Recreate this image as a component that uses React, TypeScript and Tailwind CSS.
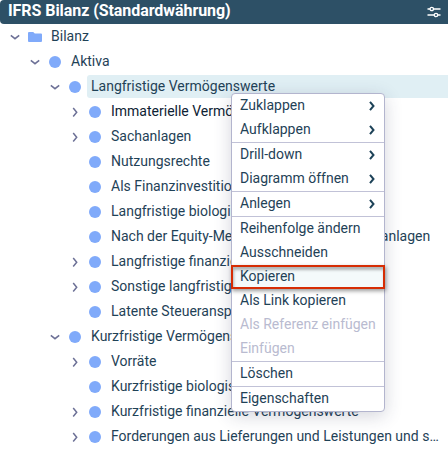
import { Fragment } from 'react';

type NodeState = 'open' | 'closed' | 'leaf';

interface TreeNode {
  label: string;
  level: number;
  state: NodeState;
  folder?: boolean;
  selected?: boolean;
  current?: boolean;
}

interface MenuItem {
  label: string;
  submenu?: boolean;
  disabled?: boolean;
  highlighted?: boolean;
}

const nodes: TreeNode[] = [
  { label: 'Bilanz', level: 0, state: 'open', folder: true },
  { label: 'Aktiva', level: 1, state: 'open' },
  { label: 'Langfristige Vermögenswerte', level: 2, state: 'open', selected: true },
  { label: 'Immaterielle Vermögenswerte', level: 3, state: 'closed', current: true },
  { label: 'Sachanlagen', level: 3, state: 'closed' },
  { label: 'Nutzungsrechte', level: 3, state: 'leaf' },
  { label: 'Als Finanzinvestition', level: 3, state: 'leaf' },
  { label: 'Langfristige biologische', level: 3, state: 'leaf' },
  { label: 'Nach der Equity-Methode bilanzierte Finanzanlagen', level: 3, state: 'leaf' },
  { label: 'Langfristige finanzielle', level: 3, state: 'closed' },
  { label: 'Sonstige langfristige', level: 3, state: 'closed' },
  { label: 'Latente Steueransprüche', level: 3, state: 'leaf' },
  { label: 'Kurzfristige Vermögenswerte', level: 2, state: 'open' },
  { label: 'Vorräte', level: 3, state: 'closed' },
  { label: 'Kurzfristige biologische', level: 3, state: 'leaf' },
  { label: 'Kurzfristige finanzielle Vermögenswerte', level: 3, state: 'closed' },
  { label: 'Forderungen aus Lieferungen und Leistungen und s…', level: 3, state: 'closed' },
];

const menuGroups: MenuItem[][] = [
  [
    { label: 'Zuklappen', submenu: true },
    { label: 'Aufklappen', submenu: true },
  ],
  [
    { label: 'Drill-down', submenu: true },
    { label: 'Diagramm öffnen', submenu: true },
  ],
  [{ label: 'Anlegen', submenu: true }],
  [
    { label: 'Reihenfolge ändern' },
    { label: 'Ausschneiden' },
    { label: 'Kopieren', highlighted: true },
    { label: 'Als Link kopieren' },
    { label: 'Als Referenz einfügen', disabled: true },
    { label: 'Einfügen', disabled: true },
  ],
  [{ label: 'Löschen' }],
  [{ label: 'Eigenschaften' }],
];

const indent = ['pl-[10px]', 'pl-[30px]', 'pl-[50px]', 'pl-[70px]'];

function Toggle({ state }: { state: NodeState }) {
  return (
    <svg className="h-[10px] w-[10px] shrink-0" viewBox="0 0 10 10" fill="none" stroke="#6c7096" strokeWidth="1.5">
      {state === 'open' && <path d="M0.8 3.3 L5 6.7 L9.2 3.3" />}
      {state === 'closed' && <path d="M3.2 1 L6.7 5.2 L3.2 9.4" />}
    </svg>
  );
}

function TreeRow({ node }: { node: TreeNode }) {
  return (
    <div className={`flex h-[25px] items-center ${indent[node.level]}`}>
      <Toggle state={node.state} />
      {node.folder ? (
        <svg className="ml-2 h-3 w-[14px] shrink-0" viewBox="0 0 14 12" fill="#80aafa">
          <path d="M1 1 H5.2 L6.8 2.6 H13 Q14 2.6 14 3.6 V10 Q14 11 13 11 H1 Q0 11 0 10 V2 Q0 1 1 1 Z" />
        </svg>
      ) : (
        <span className="ml-[9px] mr-px h-3 w-3 shrink-0 rounded-full bg-[#80aafa]" />
      )}
      <span
        className={`ml-[5px] h-[23px] flex-1 whitespace-nowrap rounded-l-[3px] pl-1 leading-[22px] ${
          node.selected ? 'bg-[#e0eff4]' : ''
        } ${node.current ? 'text-[#0d2233]' : ''}`}
      >
        {node.label}
      </span>
    </div>
  );
}

function ContextMenu() {
  return (
    <div className="absolute left-[231px] top-[93px] w-[154px] rounded-[4px] border border-[#b3b5ce] bg-white shadow-[0_4px_18px_rgba(40,45,80,0.2)]">
      {menuGroups.map((group, index) => (
        <Fragment key={index}>
          {index > 0 && <div className="h-px bg-[#c1c2d7]" />}
          {group.map((item) => (
            <div
              key={item.label}
              className={`flex h-6 items-center justify-between pl-2 pr-[9px] ${
                item.disabled ? 'text-[#b9bbd0]' : ''
              } ${
                item.highlighted
                  ? 'relative -mx-px border-2 border-[#d62d04] bg-[#f4fafb] pl-[7px] shadow-[1px_2px_4px_rgba(0,0,0,0.4),inset_1px_3px_3px_rgba(0,0,0,0.28)]'
                  : ''
              }`}
            >
              <span className="relative -top-px whitespace-nowrap">{item.label}</span>
              {item.submenu && (
                <svg className="h-[10px] w-[6px]" viewBox="0 0 6 10" fill="none" stroke="#1d4258" strokeWidth="2">
                  <path d="M1 0.8 L4.5 5 L1 9.2" />
                </svg>
              )}
            </div>
          ))}
        </Fragment>
      ))}
    </div>
  );
}

export default function App() {
  return (
    <div className="relative h-[454px] w-[448px] overflow-hidden bg-white font-['Roboto',sans-serif] text-[14px] text-[#1f4257]">
      <header className="flex h-6 items-center justify-between rounded-l-[4px] bg-[#2d5066] pl-2 pr-[7px] text-white">
        <h1 className="relative -top-px whitespace-nowrap text-[16px] font-bold leading-6 tracking-[-0.06px]">
          IFRS Bilanz (Standardwährung)
        </h1>
        <svg className="h-3 w-[14px]" viewBox="0 0 14 12" fill="none" stroke="white" strokeWidth="1.3">
          <path d="M0.5 3 H3 M6.5 3 H13.5 M0.5 9 H7.2 M10.8 9 H13.5" />
          <circle cx="4.8" cy="3" r="1.7" />
          <circle cx="9" cy="9" r="1.7" />
        </svg>
      </header>
      <main>
        {nodes.map((node) => (
          <TreeRow key={node.label} node={node} />
        ))}
      </main>
      <ContextMenu />
    </div>
  );
}
